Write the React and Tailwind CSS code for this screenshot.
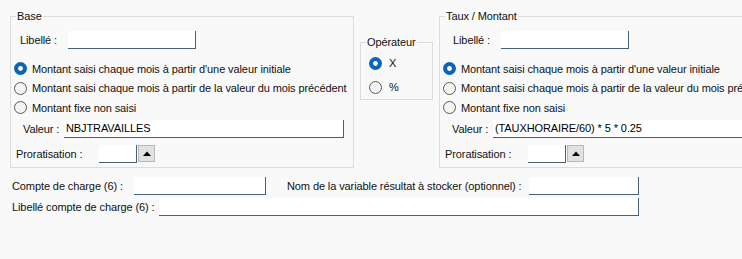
import React from "react";

const font = { fontFamily: '"Liberation Sans", Arial, sans-serif' };

const Radio = ({ checked }) =>
  checked ? (
    <svg width="13" height="13" viewBox="0 0 13 13" className="shrink-0">
      <circle cx="6.5" cy="6.5" r="6.5" fill="#0a64b8" />
      <circle cx="6.5" cy="6.5" r="2.4" fill="#ffffff" />
    </svg>
  ) : (
    <svg width="13" height="13" viewBox="0 0 13 13" className="shrink-0">
      <circle cx="6.5" cy="6.5" r="6" fill="#f4f4f4" stroke="#5a5a5a" strokeWidth="1" />
    </svg>
  );

const Input = ({ className = "", value = "" }) => (
  <div
    className={`h-[18px] shrink-0 bg-white border-r border-b border-[#466278] flex items-center pl-[2px] text-black whitespace-nowrap overflow-hidden ${className}`}
  >
    {value}
  </div>
);

const RadioRow = ({ checked, label }) => (
  <div className="flex items-center h-[19.5px] gap-[5px] whitespace-nowrap">
    <Radio checked={checked} />
    <span>{label}</span>
  </div>
);

const Spin = () => (
  <div className="ml-[1px] w-[17px] h-[17px] shrink-0 bg-[#e1e1e1] border border-[#b9b9b9] flex items-center justify-center">
    <svg width="8" height="5" viewBox="0 0 8 5">
      <path d="M0 5 L4 0.5 L8 5 Z" fill="#000" />
    </svg>
  </div>
);

const Group = ({ title, className = "", children }) => (
  <fieldset className={`border border-[#dcdcdc] rounded-none p-0 min-w-0 shrink-0 ${className}`}>
    <legend className="ml-[5px] px-[1px] h-[16px] leading-[16px] whitespace-nowrap">{title}</legend>
    {children}
  </fieldset>
);

const ModeBlock = ({ valeur, libShift }) => (
  <div className="flex flex-col whitespace-nowrap">
    <div className="flex items-center mt-[7px] h-[18px]" style={{ paddingLeft: 9 + libShift }}>
      <span className="w-[48px] shrink-0">Libellé :</span>
      <Input className="w-[128px]" />
    </div>
    <div className="flex flex-col mt-[10px] pl-[3px]">
      <RadioRow checked label="Montant saisi chaque mois à partir d'une valeur initiale" />
      <RadioRow label="Montant saisi chaque mois à partir de la valeur du mois précédent" />
      <RadioRow label="Montant fixe non saisi" />
    </div>
    <div className="flex items-center mt-[2px] h-[18px] pl-[12px]">
      <span className="w-[41px] shrink-0">Valeur :</span>
      <Input className="w-[280px]" value={valeur} />
    </div>
    <div className="flex items-center mt-[7px] h-[18px] pl-[5px]">
      <span className="w-[83px] shrink-0">Proratisation :</span>
      <Input className="w-[38px]" />
      <Spin />
    </div>
    <div className="h-[6px]" />
  </div>
);

export default function App() {
  return (
    <div
      className="w-[742px] h-[259px] bg-[#f9f9f9] overflow-hidden text-[11px] leading-[16px] tracking-[-0.1px] text-[#111]"
      style={font}
    >
      <div className="flex items-start">
        <Group title="Base" className="ml-[10px] mt-[8px] w-[344px] h-[160px]">
          <ModeBlock valeur="NBJTRAVAILLES" libShift={0} />
        </Group>
        <Group title="Opérateur" className="ml-[6px] mt-[34px] w-[73px] h-[66px]">
          <div className="flex flex-col pl-[8px] mt-[1px]">
            <div className="flex items-center gap-[7px] h-[24px]">
              <Radio checked />
              <span>X</span>
            </div>
            <div className="flex items-center gap-[7px] h-[24px]">
              <Radio />
              <span>%</span>
            </div>
          </div>
        </Group>
        <Group title="Taux / Montant" className="ml-[6px] mt-[8px] w-[330px] h-[160px]">
          <ModeBlock valeur="(TAUXHORAIRE/60) * 5 * 0.25" libShift={4} />
        </Group>
      </div>

      <div className="flex flex-col pl-[12px] mt-[9px] whitespace-nowrap">
        <div className="flex items-center h-[18px]">
          <span className="w-[122px] shrink-0">Compte de charge (6) :</span>
          <Input className="w-[132px]" />
          <span className="ml-[21px] w-[242px] shrink-0">
            Nom de la variable résultat à stocker (optionnel) :
          </span>
          <Input className="w-[110px]" />
        </div>
        <div className="flex items-center h-[18px] mt-[3px]">
          <span className="w-[147px] shrink-0">Libellé compte de charge (6) :</span>
          <Input className="w-[480px]" />
        </div>
      </div>
    </div>
  );
}
